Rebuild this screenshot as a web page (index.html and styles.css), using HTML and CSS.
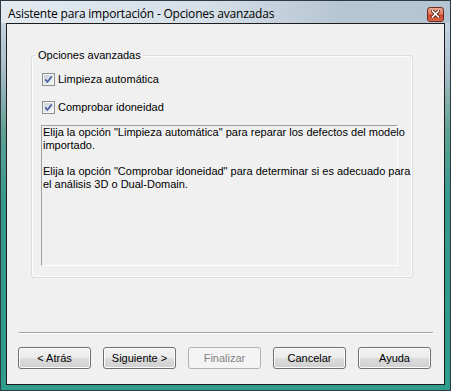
FILE: index.html
```html
<!DOCTYPE html>
<html lang="es">
<head>
    <meta charset="UTF-8">
    <title>Asistente para importación - Opciones avanzadas</title>
    <link rel="stylesheet" href="styles.css">
</head>
<body>
    <div class="window">
        <div class="titlebar">
            <span class="title">Asistente para importación - Opciones avanzadas</span>
            <span class="close">
                <svg width="9" height="8" viewBox="0 0 9 8">
                    <path d="M1.5 1 L7.5 7 M7.5 1 L1.5 7" stroke="#5a1d12" stroke-width="3.2" stroke-linecap="square"/>
                    <path d="M1.5 1 L7.5 7 M7.5 1 L1.5 7" stroke="#ffffff" stroke-width="1.6" stroke-linecap="square"/>
                </svg>
            </span>
        </div>

        <div class="client">
            <div class="group">
                <div class="group-title">Opciones avanzadas</div>

                <label class="check first">
                    <span class="box">
                        <svg width="13" height="13" viewBox="0 0 13 13">
                            <defs>
                                <linearGradient id="boxfill" x1="0" y1="0" x2="1" y2="1">
                                    <stop offset="0" stop-color="#c9ced6"/>
                                    <stop offset="1" stop-color="#f7f7f7"/>
                                </linearGradient>
                            </defs>
                            <rect x="0.5" y="0.5" width="12" height="12" fill="#f4f4f4" stroke="#8e8f8f"/>
                            <rect x="2" y="2" width="9" height="9" fill="url(#boxfill)"/>
                            <path d="M3.3 6.4 L5.4 9 L9.8 3.4" fill="none" stroke="#4a62a0" stroke-width="1.7"/>
                        </svg>
                    </span>
                    Limpieza automática
                </label>

                <label class="check second">
                    <span class="box">
                        <svg width="13" height="13" viewBox="0 0 13 13">
                            <rect x="0.5" y="0.5" width="12" height="12" fill="#f4f4f4" stroke="#8e8f8f"/>
                            <rect x="2" y="2" width="9" height="9" fill="url(#boxfill)"/>
                            <path d="M3.3 6.4 L5.4 9 L9.8 3.4" fill="none" stroke="#4a62a0" stroke-width="1.7"/>
                        </svg>
                    </span>
                    Comprobar idoneidad
                </label>

                <div class="info">
                    Elija la opción "Limpieza automática" para reparar los defectos del modelo<br>
                    importado.<br>
                    <br>
                    Elija la opción "Comprobar idoneidad" para determinar si es adecuado para<br>
                    el análisis 3D o Dual-Domain.
                </div>
            </div>

            <div class="separator"></div>

            <div class="buttons">
                <button class="button">&lt; Atrás</button>
                <button class="button">Siguiente &gt;</button>
                <button class="button" disabled>Finalizar</button>
                <button class="button">Cancelar</button>
                <button class="button">Ayuda</button>
            </div>
        </div>
    </div>
</body>
</html>
```

FILE: styles.css
```css
body {
    margin: 0;
    padding: 0;
    width: 451px;
    height: 391px;
    overflow: hidden;
    background-color: #2b3a40;
}

.window {
    box-sizing: border-box;
    width: 451px;
    height: 391px;
    border: 1px solid #2c3b44;
    padding: 0 5px 5px 5px;
    display: flex;
    flex-direction: column;
    background: linear-gradient(180deg, #dbe4ec 0, #c4d2dd 24px, #a9bcc6 70px, #5fa196 130px, #35998a 200px, #2f9c8c 100%);
}

.titlebar {
    height: 22px;
    display: flex;
    align-items: center;
    justify-content: space-between;
    margin: 0 -5px;
    padding: 0 6px 0 7px;
    background: linear-gradient(90deg, #e3eaf0 0, #d6e0e8 45%, #b7c6d3 75%, #b5c4d1 100%);
}

.title {
    font-family: 'Open Sans', 'Noto Sans', sans-serif;
    font-size: 12px;
    color: #000;
    padding-top: 3px;
    letter-spacing: -0.2px;
}

.close {
    box-sizing: border-box;
    width: 17px;
    height: 15px;
    margin-top: 4px;
    border: 1px solid #6e2b20;
    border-radius: 3px;
    background: linear-gradient(180deg, #eba892 0, #dc7c62 45%, #c9462b 55%, #d8684a 100%);
    display: flex;
    align-items: center;
    justify-content: center;
}

.client {
    flex: 1;
    border: 1px solid #1c1c1c;
    background-color: #f0f0f0;
    font-family: 'Liberation Sans', Arial, sans-serif;
    font-size: 11px;
    color: #000;
}

.group {
    box-sizing: border-box;
    height: 223px;
    margin: 31px 31px 0 24px;
    border: 1px solid #d5dfe5;
    border-radius: 3px;
    box-shadow: inset 0 0 0 1px #fbfcfc;
}

.group-title {
    width: fit-content;
    margin: -7px 0 0 4px;
    padding: 0 2px;
    line-height: 13px;
    background-color: #f0f0f0;
}

.check {
    display: flex;
    align-items: center;
    gap: 3px;
    height: 13px;
    margin-left: 10px;
    line-height: 13px;
}

.check.first {
    margin-top: 11px;
}

.check.second {
    margin-top: 15px;
}

.box {
    display: block;
    width: 13px;
    height: 13px;
}

.box svg {
    display: block;
}

.info {
    box-sizing: border-box;
    width: 357px;
    height: 141px;
    margin: 11px 0 0 9px;
    padding: 0 1px;
    border: 1px solid;
    border-color: #a0a0a0 #ffffff #ffffff #a0a0a0;
    line-height: 13px;
    white-space: nowrap;
}

.separator {
    margin: 54px 11px 0 12px;
    border-top: 1px solid #a0a0a0;
    border-bottom: 1px solid #ffffff;
}

.buttons {
    display: flex;
    gap: 12px;
    margin: 13px 0 0 11px;
}

.button {
    box-sizing: border-box;
    width: 73px;
    height: 22px;
    padding: 0;
    border: 1px solid #707070;
    border-radius: 3px;
    background: linear-gradient(180deg, #f2f2f2 0, #ebebeb 50%, #dddddd 51%, #cfcfcf 100%);
    box-shadow: inset 0 0 0 1px #fcfcfc;
    font-family: 'Liberation Sans', Arial, sans-serif;
    font-size: 11px;
    color: #000;
}

.button:disabled {
    border-color: #adb2b5;
    background: #f4f4f4;
    box-shadow: none;
    color: #838383;
}
```
